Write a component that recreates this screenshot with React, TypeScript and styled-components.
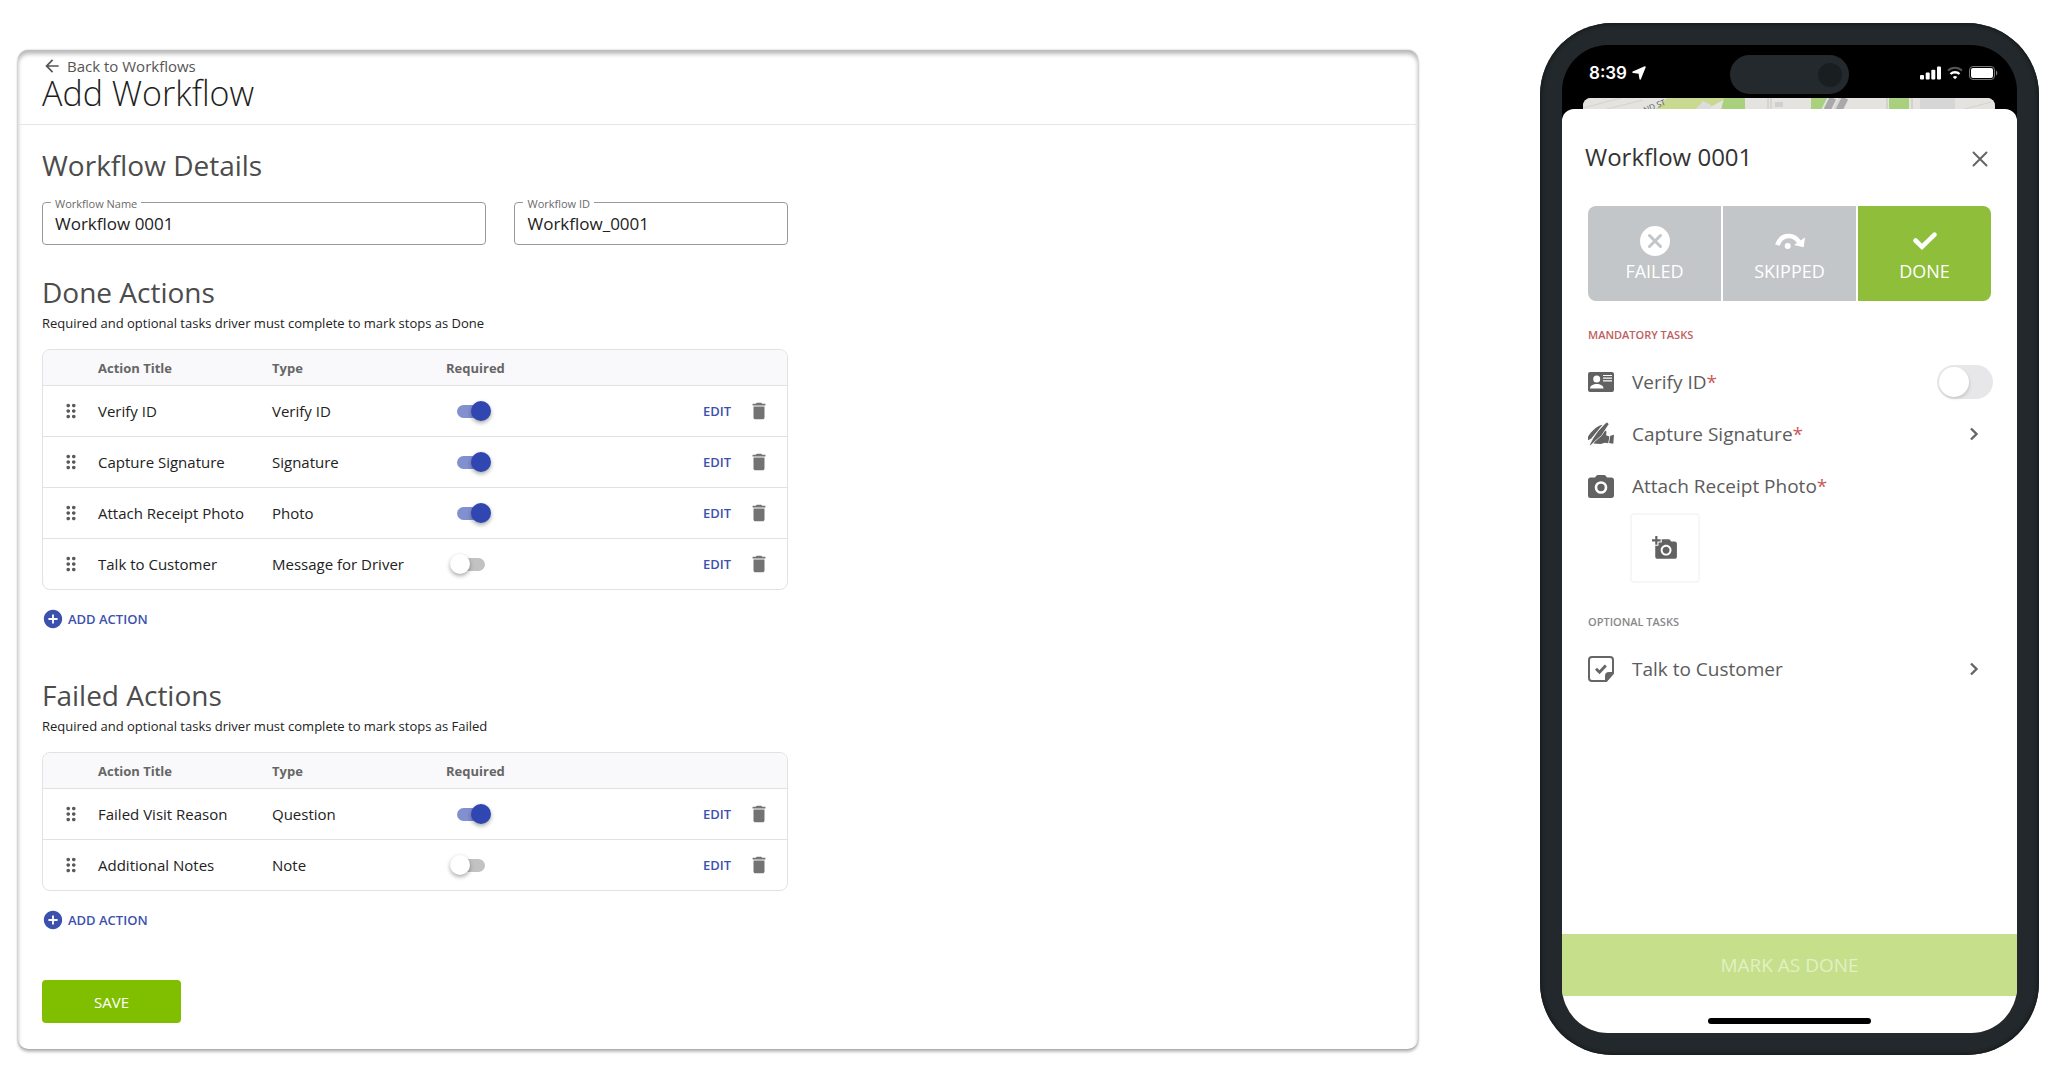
import React, { useId, useState } from 'react';
import styled, { createGlobalStyle, css } from 'styled-components';
import { MdAddAPhoto, MdAddCircle, MdArrowBack, MdDelete, MdDragIndicator } from 'react-icons/md';

const GlobalStyle = createGlobalStyle`
  *, *::before, *::after { box-sizing: border-box; }
  body {
    margin: 0;
    background: #fff;
    color: #222;
    font-family: 'Open Sans', 'Noto Sans', sans-serif;
  }
  button, input { font: inherit; color: inherit; }
`;

const PlainButton = styled.button`
  display: inline-flex;
  align-items: center;
  justify-content: center;
  padding: 0;
  border: 0;
  background: none;
  cursor: pointer;
`;

const Page = styled.div`
  display: flex;
  align-items: flex-start;
  gap: 122px;
  padding: 23px 9px 11px 18px;
`;

/* ---------- Workflow editor ---------- */

const Card = styled.main`
  flex: 1;
  min-width: 800px;
  margin-top: 27px;
  border-radius: 10px;
  background: #fff;
  box-shadow:
    inset 0 4px 4px rgba(0, 0, 0, 0.28),
    0 3px 3px rgba(0, 0, 0, 0.26),
    0 0 2px rgba(0, 0, 0, 0.3);
`;

const CardHeader = styled.header`
  padding: 3px 24px 16px;
  border-bottom: 1px solid #e6e6e6;
`;

const BackLink = styled.a`
  display: inline-flex;
  align-items: center;
  gap: 5px;
  height: 25px;
  color: #555;
  font-size: 15px;
  line-height: 24px;
  text-decoration: none;
  vertical-align: top;
`;

const PageTitle = styled.h1`
  margin: 0;
  color: #1e1e1e;
  font-size: 34px;
  font-weight: 300;
  line-height: 30px;
`;

const Form = styled.form`
  max-width: 794px;
  padding: 21px 24px 26px;
`;

const Section = styled.section`
  margin-bottom: ${(p: { $gap: number }) => p.$gap}px;
`;

const SectionTitle = styled.h2`
  margin: 0;
  padding-bottom: 2px;
  color: #4c4c4c;
  font-size: 28px;
  font-weight: 400;
  line-height: 38px;
`;

const SectionHint = styled.p`
  margin: 0 0 16px;
  color: #222;
  font-size: 13px;
  line-height: 20px;
`;

const Fields = styled.div`
  display: grid;
  grid-template-columns: 13fr 8fr;
  gap: 28px;
  margin-top: 16px;
`;

const Field = styled.div`
  position: relative;
`;

const FieldLabel = styled.label`
  position: absolute;
  top: -6px;
  left: 9px;
  padding: 0 4px;
  background: #fff;
  color: #6a6a6a;
  font-size: 11px;
  line-height: 16px;
`;

const FieldInput = styled.input`
  display: block;
  width: 100%;
  height: 43px;
  padding: 0 12px;
  border: 1px solid #999;
  border-radius: 4px;
  outline: 0;
  background: transparent;
  font-size: 17px;
`;

const TableFrame = styled.div`
  overflow: hidden;
  border: 1px solid #e2e2e2;
  border-radius: 8px;
`;

const Table = styled.table`
  width: 100%;
  border-spacing: 0;
  table-layout: fixed;

  th, td {
    padding: 0;
    text-align: left;
  }
`;

const HeadCell = styled.th`
  width: ${(p: { $width?: number }) => (p.$width ? `${p.$width}px` : 'auto')};
  height: 35px;
  background: #f9f9fb;
  color: #666;
  font-size: 13px;
  font-weight: 700;
`;

const Cell = styled.td`
  height: 51px;
  border-top: 1px solid #e2e2e2;
  font-size: 15px;
`;

const Grip = styled(PlainButton)`
  margin-left: 17px;
  color: #5a5a5a;
  cursor: grab;
  vertical-align: middle;
`;

const Switch = styled.input`
  display: grid;
  align-items: center;
  width: 41px;
  height: 20px;
  margin: 0 0 0 4px;
  appearance: none;
  cursor: pointer;

  &::before, &::after {
    content: '';
    grid-area: 1 / 1;
  }
  &::before {
    justify-self: center;
    width: 28px;
    height: 13px;
    border-radius: 7px;
    background: #c2c2c2;
  }
  &::after {
    width: 20px;
    height: 20px;
    border-radius: 50%;
    background: #fff;
    box-shadow: 0 2px 4px rgba(0, 0, 0, 0.35);
  }
  &:checked::before { background: #8390d0; }
  &:checked::after {
    justify-self: end;
    background: #3046b0;
  }
`;

const RowActions = styled.div`
  display: flex;
  align-items: center;
  justify-content: flex-end;
  gap: 17px;
  padding-right: 17px;
`;

const EditButton = styled(PlainButton)`
  color: #3c51ad;
  font-size: 13px;
  font-weight: 600;
`;

const DeleteButton = styled(PlainButton)`
  color: #737373;
`;

const AddButton = styled(PlainButton)`
  display: flex;
  gap: 4px;
  height: 24px;
  margin-top: 17px;
  color: #3c51ad;
  font-size: 13px;
  font-weight: 600;
`;

const SaveButton = styled(PlainButton)`
  width: 139px;
  height: 43px;
  border-radius: 4px;
  background: #80bf00;
  color: #fff;
  font-size: 15px;
  font-weight: 500;
`;

type Action = { title: string; type: string; required: boolean };

const doneActions: Action[] = [
  { title: 'Verify ID', type: 'Verify ID', required: true },
  { title: 'Capture Signature', type: 'Signature', required: true },
  { title: 'Attach Receipt Photo', type: 'Photo', required: true },
  { title: 'Talk to Customer', type: 'Message for Driver', required: false },
];

const failedActions: Action[] = [
  { title: 'Failed Visit Reason', type: 'Question', required: true },
  { title: 'Additional Notes', type: 'Note', required: false },
];

function TextField({ label, value }: { label: string; value: string }) {
  const id = useId();
  return (
    <Field>
      <FieldInput id={id} defaultValue={value} />
      <FieldLabel htmlFor={id}>{label}</FieldLabel>
    </Field>
  );
}

function ActionSection({ title, hint, actions, gap }: { title: string; hint: string; actions: Action[]; gap: number }) {
  return (
    <Section $gap={gap}>
      <SectionTitle>{title}</SectionTitle>
      <SectionHint>{hint}</SectionHint>
      <TableFrame>
        <Table>
          <thead>
            <tr>
              <HeadCell $width={55} />
              <HeadCell $width={174}>Action Title</HeadCell>
              <HeadCell $width={174}>Type</HeadCell>
              <HeadCell $width={174}>Required</HeadCell>
              <HeadCell />
            </tr>
          </thead>
          <tbody>
            {actions.map((a) => (
              <tr key={a.title}>
                <Cell>
                  <Grip type="button" aria-label={`Move ${a.title}`}>
                    <MdDragIndicator size={22} />
                  </Grip>
                </Cell>
                <Cell>{a.title}</Cell>
                <Cell>{a.type}</Cell>
                <Cell>
                  <Switch type="checkbox" defaultChecked={a.required} aria-label={`${a.title} required`} />
                </Cell>
                <Cell>
                  <RowActions>
                    <EditButton type="button">EDIT</EditButton>
                    <DeleteButton type="button" aria-label={`Delete ${a.title}`}>
                      <MdDelete size={22} />
                    </DeleteButton>
                  </RowActions>
                </Cell>
              </tr>
            ))}
          </tbody>
        </Table>
      </TableFrame>
      <AddButton type="button">
        <MdAddCircle size={22} />
        ADD ACTION
      </AddButton>
    </Section>
  );
}

/* ---------- Driver phone ---------- */

const Phone = styled.aside`
  flex: none;
  display: flex;
  width: 499px;
  aspect-ratio: 499 / 1032;
  padding: 22px;
  border-radius: 72px;
  background: #22282b;
  box-shadow: inset 0 0 3px 2px #191d1f;
`;

const Screen = styled.div`
  flex: 1;
  display: flex;
  flex-direction: column;
  overflow: hidden;
  border-radius: 46px;
  background: #000;
`;

const StatusBar = styled.div`
  display: grid;
  grid-template-columns: 1fr 119px 1fr;
  align-items: center;
  height: 53px;
  padding: 6px 19px 0;
  color: #fff;
`;

const Clock = styled.div`
  display: flex;
  align-items: center;
  gap: 5px;
  padding: 0 0 4px 8px;
  font-family: Inter, 'Liberation Sans', sans-serif;
  font-size: 17px;
  font-weight: 600;
`;

const Island = styled.div`
  display: flex;
  align-items: center;
  justify-content: flex-end;
  height: 39px;
  padding-right: 7px;
  border-radius: 20px;
  background: #23292d;

  &::after {
    content: '';
    width: 24px;
    height: 24px;
    border-radius: 50%;
    background: #191e21;
  }
`;

const Signals = styled.div`
  display: flex;
  align-items: center;
  justify-content: flex-end;
  gap: 6px;
  padding-bottom: 4px;
`;

const MapStrip = styled.div`
  height: 24px;
  margin: 0 22px -13px 21px;
  overflow: hidden;
  border-radius: 8px 8px 0 0;
  background: #e4e3e0;

  svg { display: block; }
`;

const Sheet = styled.div`
  position: relative;
  flex: 1;
  display: flex;
  flex-direction: column;
  border-radius: 12px 12px 0 0;
  background: #fff;
`;

const SheetBody = styled.div`
  flex: 1;
  padding: 29px 26px 0;
`;

const SheetHeader = styled.div`
  display: flex;
  align-items: center;
  justify-content: space-between;
  height: 42px;
  margin: 0 3px 26px -3px;
`;

const SheetTitle = styled.h2`
  margin: 0;
  padding-bottom: 4px;
  color: #333;
  font-size: 24px;
  font-weight: 400;
  line-height: 38px;
`;

const Outcomes = styled.div`
  display: grid;
  grid-template-columns: repeat(3, 1fr);
  gap: 2px;
  overflow: hidden;
  border-radius: 8px;
`;

const Outcome = styled(PlainButton)`
  flex-direction: column;
  gap: 3px;
  height: 95px;
  padding-top: 2px;
  background: #c3c6c9;
  color: #fff;
  font-size: 18px;
  font-weight: 500;
  line-height: 24px;
  ${(p: { $active?: boolean }) => p.$active && css`background: #8ebe3a;`}
`;

const OutcomeIcon = styled.span`
  display: flex;
  align-items: center;
  justify-content: center;
  height: 30px;
`;

const TaskGroup = styled.div`
  padding-top: 24px;
`;

const GroupLabel = styled.h3`
  margin: 0;
  color: ${(p: { $required?: boolean }) => (p.$required ? '#c0605f' : '#888')};
  font-size: 11px;
  font-weight: 600;
  line-height: 20px;
`;

const TaskList = styled.ul`
  margin: 0;
  padding: 11px 0 0;
  list-style: none;
`;

const Task = styled.li`
  display: grid;
  grid-template-columns: 26px 1fr auto;
  align-items: center;
  gap: 18px;
  min-height: 52px;
  color: #5c5c5c;
  font-size: 19px;
`;

const Star = styled.span`
  color: #cc5a58;
`;

const Chevron = styled(PlainButton)`
  margin-right: 12px;
`;

const PhoneSwitch = styled.input`
  display: flex;
  align-items: center;
  width: 56px;
  height: 34px;
  margin: 0 -2px 0 0;
  padding: 2px;
  appearance: none;
  border-radius: 17px;
  background: #e7e7e9;

  &::after {
    content: '';
    width: 30px;
    height: 30px;
    border-radius: 50%;
    background: #fff;
    box-shadow: 1px 2px 3px rgba(0, 0, 0, 0.12);
  }
  &:checked {
    justify-content: flex-end;
    background: #8ebe3a;
  }
`;

const AddPhoto = styled(PlainButton)`
  width: 70px;
  height: 70px;
  margin: 1px 0 29px 42px;
  border: 2px solid #f6f6f6;
  border-radius: 4px;
  color: #626262;
`;

const MarkDone = styled(PlainButton)`
  height: 62px;
  background: #c5df8a;
  color: #e2f0c4;
  font-size: 19px;
  font-weight: 500;
`;

const HomeArea = styled.div`
  display: flex;
  justify-content: center;
  height: 37px;
  padding-top: 22px;

  &::after {
    content: '';
    width: 163px;
    height: 6px;
    border-radius: 3px;
    background: #000;
  }
`;

const LocationArrow = () => (
  <svg width="14" height="14" viewBox="0 0 14 14" fill="#fff" stroke="#fff" strokeWidth="1.500" strokeLinejoin="round">
    <path d="M13 1 8.200 13 7.200 7 1 6.200Z" />
  </svg>
);

const SignalBars = () => (
  <svg width="21" height="14" viewBox="0 0 21 14" fill="#fff">
    <rect x="0" y="9" width="4" height="4.500" rx="1" />
    <rect x="5.700" y="6.500" width="4" height="7" rx="1" />
    <rect x="11.300" y="3.700" width="4" height="9.800" rx="1" />
    <rect x="17" y="0.500" width="4" height="13" rx="1" />
  </svg>
);

const Wifi = () => (
  <svg width="16" height="14" viewBox="0 0 16 14" fill="none">
    <path d="M1 4.600a10 10 0 0 1 14 0" stroke="#555" strokeWidth="2" />
    <path d="M3.500 8a6.500 6.500 0 0 1 9 0" stroke="#fff" strokeWidth="2.400" />
    <path d="M8 13.200 5.800 11a3.300 3.300 0 0 1 4.400 0Z" fill="#fff" />
  </svg>
);

const Battery = () => (
  <svg width="29" height="14" viewBox="0 0 29 14">
    <rect x="0.500" y="0.500" width="25" height="13" rx="3.500" fill="none" stroke="#777" />
    <rect x="2" y="2" width="22" height="10" rx="2" fill="#fff" />
    <path d="M27 4.500c1.800.8 1.800 4.200 0 5Z" fill="#777" />
  </svg>
);

const MapArt = () => (
  <svg width="412" height="24" viewBox="0 0 412 24" preserveAspectRatio="none">
    <rect width="412" height="24" fill="#e4e3e0" />
    <path d="M84 0h60L122 12H72Z" fill="#c9d98f" />
    <path d="M141 0h21v12h-24Z" fill="#a9d07c" />
    <path d="M112 12 120 3l8 4v5Z" fill="#dcdcdc" />
    <path d="M185 0v12M188 0v12" stroke="#c6c6c6" />
    <rect x="192" y="4" width="8" height="5" fill="#cfcfcf" />
    <path d="M228 0h16l-6 12h-10Z" fill="#a9d07c" />
    <path d="M250 0 244 12M262 0l-6 12" stroke="#a9a9ab" strokeWidth="7" />
    <path d="M257 0l-6 12" stroke="#d5d5d5" strokeWidth="2" />
    <rect x="306" width="20" height="12" fill="#a9d07c" />
    <path d="M304 0v12M329 0v12" stroke="#bfc3b8" />
    <path d="M337 0h35v12h-35Z" fill="#d6d6d6" />
    <path d="M0 10 38 0M20 12 60 2M378 12l30-8" stroke="#d2d2d2" />
    <text x="62" y="15" fontSize="8" fill="#555" transform="rotate(-22 62 15)">ND ST</text>
  </svg>
);

const Cross = () => (
  <svg width="16" height="16" viewBox="0 0 16 16" stroke="#666" strokeWidth="2" strokeLinecap="round">
    <path d="M1.500 1.500l13 13M14.500 1.500l-13 13" />
  </svg>
);

const FailedIcon = () => (
  <svg width="30" height="30" viewBox="0 0 30 30">
    <circle cx="15" cy="15" r="15" fill="#fff" />
    <path d="M9.500 9.500l11 11M20.500 9.500l-11 11" stroke="#c3c6c9" strokeWidth="3" strokeLinecap="round" />
  </svg>
);

const SkippedIcon = () => (
  <svg width="30" height="16" viewBox="0 0 30 16">
    <path d="M2.300 12C4.500 6 9 2.800 14 3c4.300.1 7.300 2 10 6" fill="none" stroke="#fff" strokeWidth="4.600" />
    <path d="M30 4.500 28.700 14.300 19 12Z" fill="#fff" />
    <circle cx="12.700" cy="13" r="3" fill="#fff" />
  </svg>
);

const DoneIcon = () => (
  <svg width="26" height="20" viewBox="0 0 26 20">
    <path d="M3.500 9.500 10 15.800 22.500 3.700" fill="none" stroke="#fff" strokeWidth="4.600" strokeLinecap="round" />
  </svg>
);

const IdCardIcon = () => (
  <svg width="26" height="20" viewBox="0 0 26 20">
    <rect width="26" height="20" rx="2" fill="#626262" />
    <circle cx="8.700" cy="7" r="3.500" fill="#fff" />
    <path d="M2 16.500c0-6 13.500-6 13.500 0Z" fill="#fff" />
    <path d="M15 3.500h9M15 6.200h9M15 8.900h9" stroke="#fff" strokeWidth="1.200" />
  </svg>
);

const SignatureIcon = () => (
  <svg width="26" height="24" viewBox="0 0 26 24" fill="#626262">
    <path d="M14.500 2.800C9 4 3.500 9 0 14.500v3.800l3-1.500Z" />
    <path d="M6 20.500 15 10l3-1.500c.8 1.700.4 3 0 4.800l3.400 1.200-1.200 6.700-3.200-.4-4.500 1.200-7-.4Z" />
    <path d="m22.300 13.800 3.700-1.100-.7 9.100-4.300-.9Z" />
    <path d="M17.300 1.200 19.400 0l1.500 2.300-7.300 11.200-6.100 5.300-4.800 4.600-1-.9 3.400-6.500L9.600 9.500Z" stroke="#fff" strokeWidth="0.700" />
  </svg>
);

const CameraIcon = () => (
  <svg width="26" height="23" viewBox="0 0 26 23">
    <path
      d="M10 0h6c.8 0 1.300.2 1.700.8L19 2.500h4.500c1.400 0 2.500 1 2.500 2.400v15.600c0 1.400-1.100 2.500-2.500 2.500h-21A2.500 2.500 0 0 1 0 20.500V4.900c0-1.400 1.100-2.400 2.500-2.400H7L8.300.8C8.700.2 9.200 0 10 0Z"
      fill="#626262"
    />
    <circle cx="13" cy="12.500" r="5" fill="none" stroke="#fff" strokeWidth="2.600" />
  </svg>
);

const NoteCheckIcon = () => (
  <svg width="26" height="26" viewBox="0 0 26 26" fill="none" stroke="#666" strokeWidth="2">
    <path d="M25 17V4a3 3 0 0 0-3-3H4a3 3 0 0 0-3 3v18a3 3 0 0 0 3 3h14Z" strokeLinejoin="round" />
    <path d="M25 17h-4a3 3 0 0 0-3 3v5Z" fill="#666" strokeLinejoin="round" />
    <path d="m8 12.800 3.500 3.400 6.300-6.700" strokeWidth="2.800" />
  </svg>
);

const ChevronIcon = () => (
  <svg width="10" height="14" viewBox="0 0 10 14" fill="none" stroke="#666" strokeWidth="2.400">
    <path d="m2 1.500 5.500 5.500L2 12.500" />
  </svg>
);

function DriverPhone() {
  const [verified, setVerified] = useState(false);
  return (
    <Phone>
      <Screen>
        <StatusBar>
          <Clock>
            8:39
            <LocationArrow />
          </Clock>
          <Island />
          <Signals>
            <SignalBars />
            <Wifi />
            <Battery />
          </Signals>
        </StatusBar>
        <MapStrip>
          <MapArt />
        </MapStrip>
        <Sheet>
          <SheetBody>
            <SheetHeader>
              <SheetTitle>Workflow 0001</SheetTitle>
              <PlainButton aria-label="Close">
                <Cross />
              </PlainButton>
            </SheetHeader>
            <Outcomes>
              <Outcome>
                <OutcomeIcon><FailedIcon /></OutcomeIcon>
                FAILED
              </Outcome>
              <Outcome>
                <OutcomeIcon><SkippedIcon /></OutcomeIcon>
                SKIPPED
              </Outcome>
              <Outcome $active>
                <OutcomeIcon><DoneIcon /></OutcomeIcon>
                DONE
              </Outcome>
            </Outcomes>
            <TaskGroup>
              <GroupLabel $required>MANDATORY TASKS</GroupLabel>
              <TaskList>
                <Task>
                  <IdCardIcon />
                  <label htmlFor="verify-id">Verify ID<Star>*</Star></label>
                  <PhoneSwitch
                    id="verify-id"
                    type="checkbox"
                    checked={verified}
                    onChange={(e) => setVerified(e.target.checked)}
                  />
                </Task>
                <Task>
                  <SignatureIcon />
                  <span>Capture Signature<Star>*</Star></span>
                  <Chevron aria-label="Open Capture Signature"><ChevronIcon /></Chevron>
                </Task>
                <Task>
                  <CameraIcon />
                  <span>Attach Receipt Photo<Star>*</Star></span>
                </Task>
              </TaskList>
              <AddPhoto aria-label="Add photo">
                <MdAddAPhoto size={26} />
              </AddPhoto>
              <GroupLabel>OPTIONAL TASKS</GroupLabel>
              <TaskList>
                <Task>
                  <NoteCheckIcon />
                  <span>Talk to Customer</span>
                  <Chevron aria-label="Open Talk to Customer"><ChevronIcon /></Chevron>
                </Task>
              </TaskList>
            </TaskGroup>
          </SheetBody>
          <MarkDone>MARK AS DONE</MarkDone>
          <HomeArea />
        </Sheet>
      </Screen>
    </Phone>
  );
}

export default function App() {
  return (
    <>
      <GlobalStyle />
      <Page>
        <Card>
          <CardHeader>
            <BackLink href="#">
              <MdArrowBack size={20} />
              Back to Workflows
            </BackLink>
            <PageTitle>Add Workflow</PageTitle>
          </CardHeader>
          <Form onSubmit={(e) => e.preventDefault()}>
            <Section $gap={28}>
              <SectionTitle>Workflow Details</SectionTitle>
              <Fields>
                <TextField label="Workflow Name" value="Workflow 0001" />
                <TextField label="Workflow ID" value="Workflow_0001" />
              </Fields>
            </Section>
            <ActionSection
              title="Done Actions"
              hint="Required and optional tasks driver must complete to mark stops as Done"
              actions={doneActions}
              gap={45}
            />
            <ActionSection
              title="Failed Actions"
              hint="Required and optional tasks driver must complete to mark stops as Failed"
              actions={failedActions}
              gap={48}
            />
            <SaveButton type="submit">SAVE</SaveButton>
          </Form>
        </Card>
        <DriverPhone />
      </Page>
    </>
  );
}
